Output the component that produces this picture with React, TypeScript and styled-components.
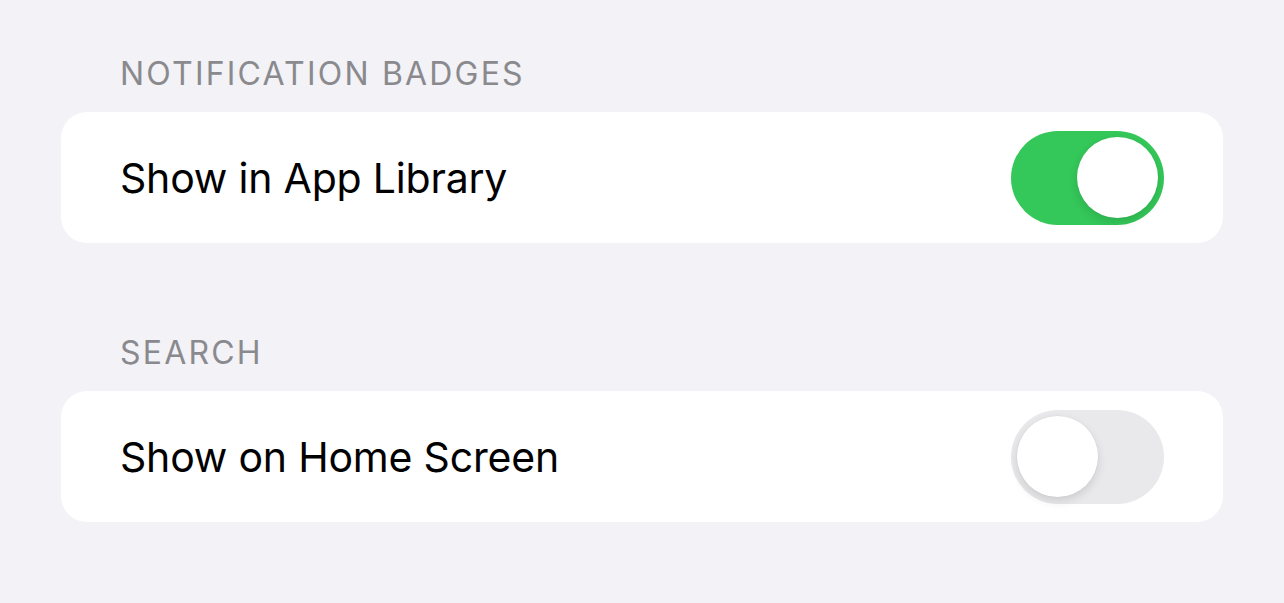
import React, { useState } from "react";
import styled, { createGlobalStyle } from "styled-components";

const Global = createGlobalStyle`
  html, body { margin: 0; padding: 0; background: #F2F2F7; }
  body { font-family: "Inter", "Liberation Sans", sans-serif; -webkit-font-smoothing: antialiased; }
`;

const Page = styled.div`
  width: 1284px;
  height: 603px;
  box-sizing: border-box;
  background: #F2F2F7;
  padding: 56px 61px 0;
  display: flex;
  flex-direction: column;
  gap: 92px;
`;

const Section = styled.section`
  display: flex;
  flex-direction: column;
  gap: 20px;
`;

const Header = styled.div`
  padding-left: 59px;
  font-size: 32px;
  line-height: 36px;
  color: #8A8A8E;
  letter-spacing: 2.2px;
  text-transform: uppercase;
`;

const Card = styled.div`
  height: 131px;
  background: #ffffff;
  border-radius: 26px;
  display: flex;
  align-items: center;
  justify-content: space-between;
  padding: 0 59px 0 59px;
`;

const Label = styled.span`
  font-size: 41px;
  color: #000;
  letter-spacing: -0.2px;
`;

const Track = styled.button<{ $on: boolean }>`
  position: relative;
  width: 153px;
  height: 94px;
  border: none;
  padding: 0;
  border-radius: 47px;
  background: ${(p) => (p.$on ? "#34C759" : "#E9E9EB")};
  cursor: pointer;
`;

const Knob = styled.span<{ $on: boolean }>`
  position: absolute;
  top: 6.5px;
  left: ${(p) => (p.$on ? "66px" : "6px")};
  width: 81px;
  height: 81px;
  border-radius: 50%;
  background: #fff;
  box-shadow: 0 4px 10px rgba(0, 0, 0, 0.12), 0 0 0 0.5px rgba(0, 0, 0, 0.04);
`;

function Toggle({ initial }: { initial: boolean }) {
  const [on, setOn] = useState(initial);
  return (
    <Track $on={on} onClick={() => setOn(!on)} aria-pressed={on}>
      <Knob $on={on} />
    </Track>
  );
}

export default function App() {
  return (
    <>
      <Global />
      <Page>
        <Section>
          <Header>Notification Badges</Header>
          <Card>
            <Label>Show in App Library</Label>
            <Toggle initial={true} />
          </Card>
        </Section>
        <Section>
          <Header>Search</Header>
          <Card>
            <Label>Show on Home Screen</Label>
            <Toggle initial={false} />
          </Card>
        </Section>
      </Page>
    </>
  );
}
